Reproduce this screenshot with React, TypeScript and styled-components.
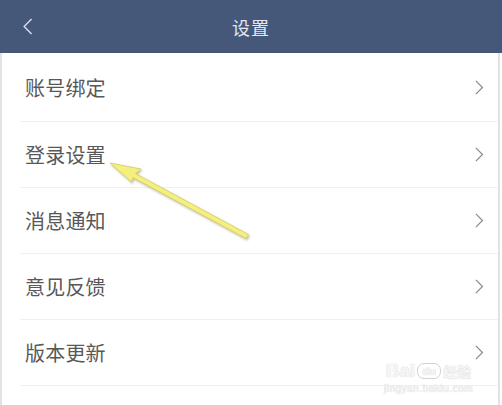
import React from 'react'
import styled, { createGlobalStyle } from 'styled-components'

const GlobalStyle = createGlobalStyle`
  html, body {
    margin: 0;
    padding: 0;
    background: #ffffff;
  }
  body {
    font-family: "Noto Sans CJK SC", "Noto Sans", sans-serif;
  }
`

const Screen = styled.div`
  position: relative;
  width: 502px;
  height: 405px;
  overflow: hidden;
  background: #ffffff;
  display: flex;
  flex-direction: column;
`

const Header = styled.header`
  height: 53px;
  flex: none;
  background: #45587a;
  display: grid;
  grid-template-columns: 60px 1fr 60px;
  align-items: center;
`

const BackButton = styled.button`
  margin: 0;
  padding: 0 0 0 22px;
  background: transparent;
  border: none;
  display: flex;
  align-items: center;
  height: 100%;
`

const Title = styled.h1`
  margin: 0;
  text-align: center;
  font-size: 18px;
  font-weight: 400;
  color: #e3e7ee;
  letter-spacing: 1px;
`

const Body = styled.div`
  flex: 1;
  border-left: 2px solid #e2e2e2;
  border-right: 2px solid #e2e2e2;
  margin-right: 2px;
  display: flex;
  flex-direction: column;
`

const Row = styled.div`
  height: 65px;
  flex: none;
  margin-left: 18px;
  padding-right: 14px;
  border-bottom: 1px solid #f0f0f0;
  display: flex;
  align-items: center;
  justify-content: space-between;
  &:first-child {
    height: 68px;
  }
`

const Label = styled.span`
  font-size: 20px;
  color: #585858;
  padding-left: 5px;
  letter-spacing: 0.2px;
`

const Annotation = styled.svg`
  position: absolute;
  left: 0;
  top: 0;
  pointer-events: none;
`

const Watermark = styled.div`
  position: absolute;
  left: 384px;
  top: 361px;
  display: flex;
  flex-direction: column;
  align-items: center;
  white-space: nowrap;
  color: #f7f7f7;
  text-shadow: 0 0 1px #bdbdbd;
  font-family: "Liberation Sans", "Noto Sans CJK SC", sans-serif;
  pointer-events: none;
`

const WatermarkLogo = styled.div`
  display: flex;
  align-items: center;
  gap: 2px;
  font-size: 19px;
  font-weight: 700;
  line-height: 20px;
`

const LogoCjk = styled.span`
  font-size: 14px;
  font-family: "Noto Sans CJK SC", sans-serif;
`

const PawBadge = styled.span`
  display: inline-flex;
  align-items: center;
  justify-content: center;
  width: 22px;
  height: 14px;
  border-radius: 7px;
  border: 1px solid #d2d2d2;
  font-size: 11px;
  line-height: 1;
`

const WatermarkUrl = styled.div`
  font-size: 10px;
  line-height: 12px;
  letter-spacing: 0.5px;
  margin-top: 2px;
`

const items = ['账号绑定', '登录设置', '消息通知', '意见反馈', '版本更新']

function Chevron({ dir, color, w = 1.4, h = 14 }: { dir: 'left' | 'right'; color: string; w?: number; h?: number }) {
  const d = dir === 'left' ? 'M9 1 L2 8 L9 15' : 'M2 1 L9 8 L2 15'
  return (
    <svg width={(h * 11) / 16} height={h} viewBox="0 0 11 16">
      <path d={d} fill="none" stroke={color} strokeWidth={w} />
    </svg>
  )
}

export default function App() {
  return (
    <>
      <GlobalStyle />
      <Screen>
        <Header>
          <BackButton aria-label="back">
            <Chevron dir="left" color="#d9dee7" w={1.3} h={17} />
          </BackButton>
          <Title>设置</Title>
          <span />
        </Header>
        <Body>
          {items.map((label) => (
            <Row key={label}>
              <Label>{label}</Label>
              <Chevron dir="right" color="#8a8a8a" w={1.3} h={15} />
            </Row>
          ))}
        </Body>

        <Annotation width="502" height="405" viewBox="0 0 502 405">
          <defs>
            <filter id="shadow" x="-10%" y="-10%" width="120%" height="120%">
              <feDropShadow dx="1" dy="1.5" stdDeviation="1" floodColor="#9a9560" floodOpacity="0.6" />
            </filter>
          </defs>
          <g filter="url(#shadow)">
            <path
              d="M110 163 L141 169 L135.5 173.6 L248.5 234.5 L246 238.5 L133 177.6 L131.5 182 Z"
              fill="#f4ef7e"
              stroke="#d2cb66"
              strokeWidth="0.8"
              strokeLinejoin="round"
            />
          </g>
        </Annotation>

        <Watermark>
          <WatermarkLogo>
            <span>Bai</span>
            <PawBadge>du</PawBadge>
            <LogoCjk>经验</LogoCjk>
          </WatermarkLogo>
          <WatermarkUrl>jingyan.baidu.com</WatermarkUrl>
        </Watermark>
      </Screen>
    </>
  )
}
